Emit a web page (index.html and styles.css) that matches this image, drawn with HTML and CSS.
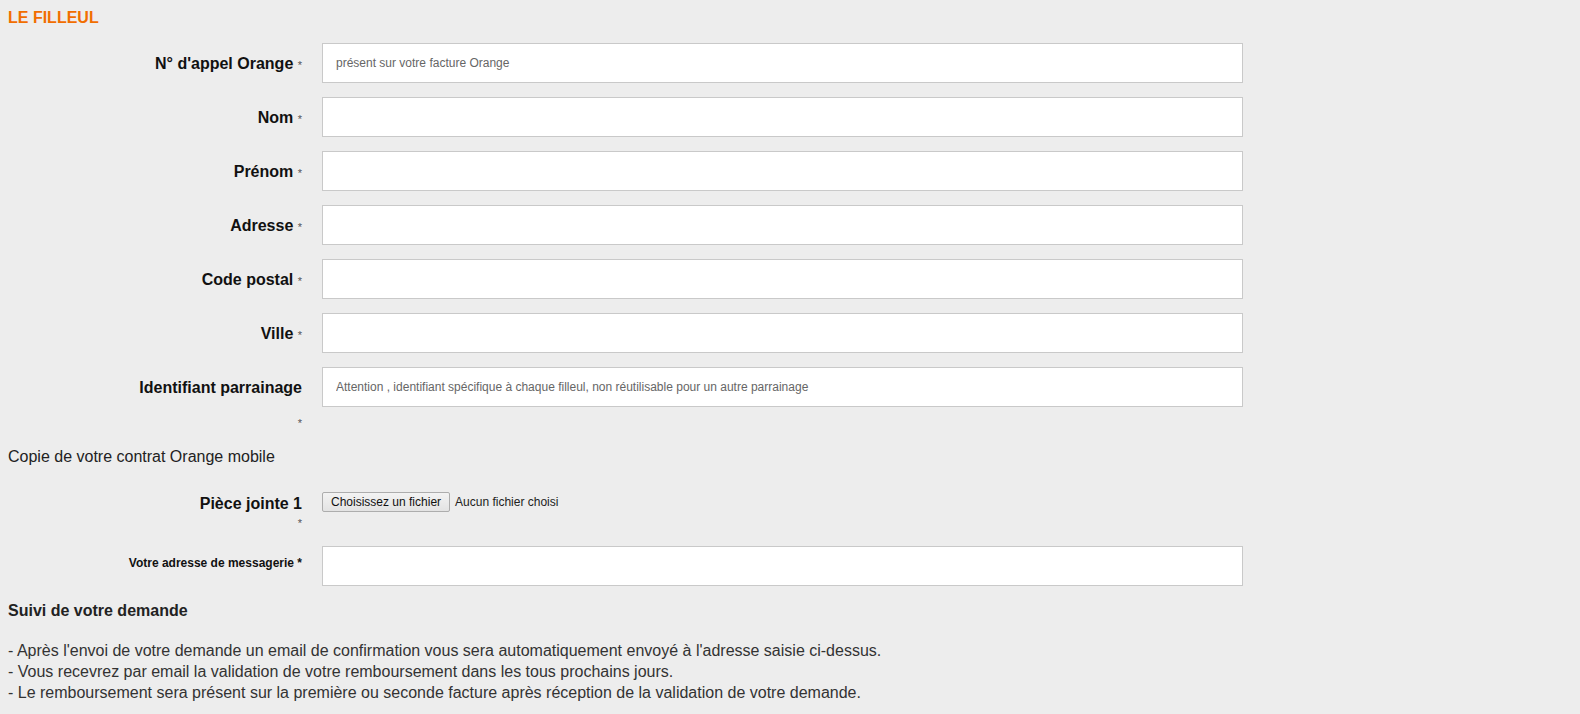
FILE: index.html
```html
<!DOCTYPE html>
<html lang="fr">
<head>
    <meta charset="UTF-8">
    <meta name="viewport" content="width=device-width, initial-scale=1.0">
    <title>Parrainage Orange - Le filleul</title>
    <link rel="stylesheet" href="styles.css">
</head>
<body>

<h2 class="section-title">LE FILLEUL</h2>

<form class="sponsor-form">
    <!-- Coordonnées du filleul -->
    <div class="field">
        <label class="field-label" for="phone">N° d'appel Orange <span class="req">*</span></label>
        <input type="text" id="phone" class="field-input" placeholder="présent sur votre facture Orange">
    </div>
    <div class="field">
        <label class="field-label" for="lastname">Nom <span class="req">*</span></label>
        <input type="text" id="lastname" class="field-input">
    </div>
    <div class="field">
        <label class="field-label" for="firstname">Prénom <span class="req">*</span></label>
        <input type="text" id="firstname" class="field-input">
    </div>
    <div class="field">
        <label class="field-label" for="address">Adresse <span class="req">*</span></label>
        <input type="text" id="address" class="field-input">
    </div>
    <div class="field">
        <label class="field-label" for="zipcode">Code postal <span class="req">*</span></label>
        <input type="text" id="zipcode" class="field-input">
    </div>
    <div class="field">
        <label class="field-label" for="city">Ville <span class="req">*</span></label>
        <input type="text" id="city" class="field-input">
    </div>
    <div class="field field-tall">
        <label class="field-label" for="sponsor-id">Identifiant parrainage<span class="req req-below">*</span></label>
        <input type="text" id="sponsor-id" class="field-input" placeholder="Attention , identifiant spécifique à chaque filleul, non réutilisable pour un autre parrainage">
    </div>

    <!-- Pièces justificatives -->
    <p class="form-note">Copie de votre contrat Orange mobile</p>

    <div class="field field-file">
        <label class="field-label" for="attachment">Pièce jointe 1<span class="req req-below">*</span></label>
        <div class="file-control">
            <label class="file-btn" for="attachment">Choisissez un fichier</label>
            <input type="file" id="attachment" class="file-hidden">
            <span class="file-name">Aucun fichier choisi</span>
        </div>
    </div>

    <div class="field field-email">
        <label class="field-label" for="email">Votre adresse de messagerie *</label>
        <input type="email" id="email" class="field-input">
    </div>
</form>

<!-- Suivi -->
<h3 class="follow-title">Suivi de votre demande</h3>
<p class="follow-text">
    - Après l'envoi de votre demande un email de confirmation vous sera automatiquement envoyé à l'adresse saisie ci-dessus.<br>
    - Vous recevrez par email la validation de votre remboursement dans les tous prochains jours.<br>
    - Le remboursement sera présent sur la première ou seconde facture après réception de la validation de votre demande.
</p>

</body>
</html>
```

FILE: styles.css
```css
body {
    margin: 8px;
    background-color: #ededed;
    font-family: "Liberation Sans", Arial, sans-serif;
    font-size: 16px;
    color: #222;
}
.section-title {
    margin: 0 0 16px;
    font-size: 16px;
    line-height: 19px;
    font-weight: bold;
    color: #f16e00;
}
.field {
    display: flex;
    align-items: flex-start;
    margin-bottom: 14px;
}
.field-label {
    width: 180px;
    margin-left: 114px;
    margin-right: 20px;
    padding-top: 2px;
    text-align: right;
    font-weight: bold;
    line-height: 38px;
    color: #111;
}
.req {
    font-size: 11px;
    font-weight: normal;
    line-height: 0;
    color: #555;
}
.req-below {
    display: block;
    line-height: 32px;
}
.field-tall {
    margin-bottom: 8px;
}
.field-input {
    box-sizing: border-box;
    width: 921px;
    height: 40px;
    margin: 0;
    padding: 0 13px;
    background: #fff;
    border: 1px solid #c9c9c9;
    border-radius: 0;
    font-family: "Liberation Sans", Arial, sans-serif;
    font-size: 12px;
    color: #333;
}
.field-input::placeholder {
    color: #666;
}
.form-note {
    margin: 0 0 26px;
    line-height: 19px;
}
.field-file {
    margin-bottom: 13px;
}
.field-file .field-label {
    padding-top: 3px;
    line-height: 18px;
}
.field-file .req-below {
    line-height: 20px;
}
.file-control {
    display: flex;
    align-items: center;
    font-size: 12px;
}
.file-btn {
    box-sizing: border-box;
    height: 20px;
    padding: 0 8px;
    line-height: 18px;
    background: linear-gradient(#f3f3f3, #e3e3e3);
    border: 1px solid #adadad;
    border-radius: 2px;
    color: #111;
    cursor: pointer;
}
.file-hidden {
    display: none;
}
.file-name {
    margin-left: 5px;
    color: #222;
}
.field-email {
    margin-bottom: 15px;
}
.field-email .field-label {
    padding-top: 10px;
    font-size: 12px;
    line-height: 14px;
}
.follow-title {
    margin: 0 0 20px;
    font-size: 16px;
    line-height: 19px;
    font-weight: bold;
    color: #222;
}
.follow-text {
    margin: 0;
    line-height: 21px;
    color: #333;
}
```
